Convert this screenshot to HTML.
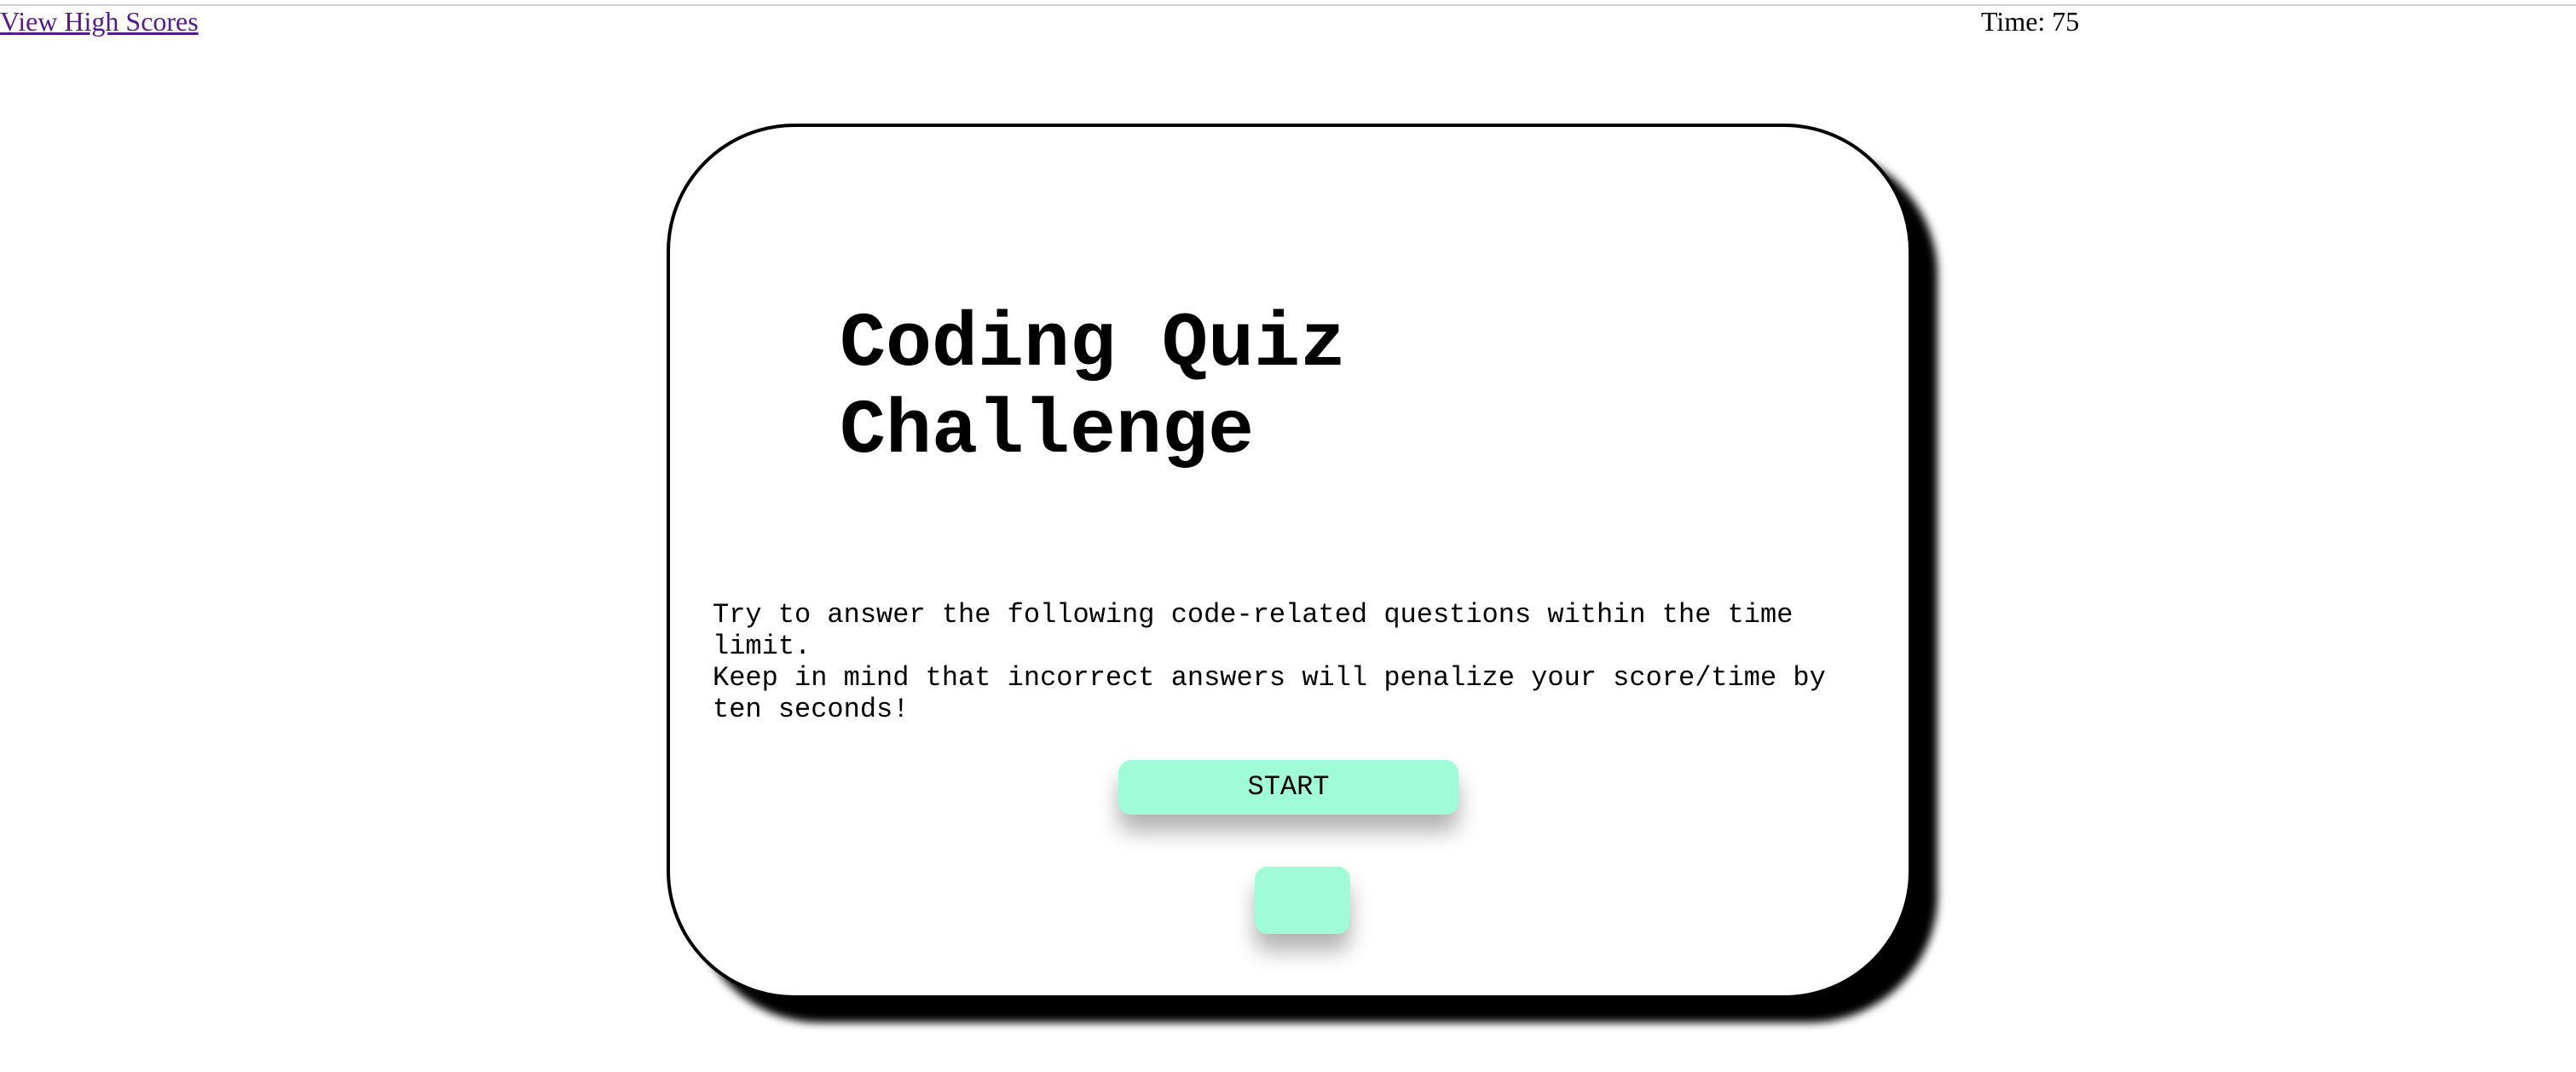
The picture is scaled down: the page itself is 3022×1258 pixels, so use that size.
<!DOCTYPE html>
<html><head><meta charset="utf-8"><style>
html,body{margin:0;padding:0;background:#fff;width:3022px;height:1258px;overflow:hidden;position:relative}
.topline{position:absolute;left:0;top:5px;width:3022px;height:2px;background:#d0d0d0}
.link{position:absolute;left:0;top:7px;font:32px "Liberation Serif",serif;color:#551a8b;text-decoration:underline}
.time{position:absolute;left:2324px;top:7px;font:32px "Liberation Serif",serif;color:#000}
.card{position:absolute;left:782px;top:145px;width:1453px;height:1019px;border:4px solid #000;border-radius:150px;background:#fff;box-shadow:30px 28px 10px #000}
h1{position:absolute;left:985px;top:354px;margin:0;font:bold 90px/102px "Liberation Mono",monospace;color:#000}
p{position:absolute;left:836px;top:703px;width:1349px;margin:0;font:32px/37px "Liberation Mono",monospace;color:#000}
.start{position:absolute;left:1312px;top:892px;width:399px;height:64px;background:#a0fbd8;border-radius:15px;box-shadow:0 20px 25px rgba(0,0,0,.3);font:32px/64px "Liberation Mono",monospace;text-align:center;color:#000}
.small{position:absolute;left:1472px;top:1017px;width:112px;height:79px;background:#a0fbd8;border-radius:15px;box-shadow:0 20px 25px rgba(0,0,0,.3)}
</style></head><body>
<div class="topline"></div>
<a class="link">View High Scores</a>
<div class="time">Time: 75</div>
<div class="card"></div>
<h1>Coding Quiz<br>Challenge</h1>
<p>Try to answer the following code-related questions within the time limit.<br>Keep in mind that incorrect answers will penalize your score/time by ten seconds!</p>
<div class="start">START</div>
<div class="small"></div>
</body></html>
